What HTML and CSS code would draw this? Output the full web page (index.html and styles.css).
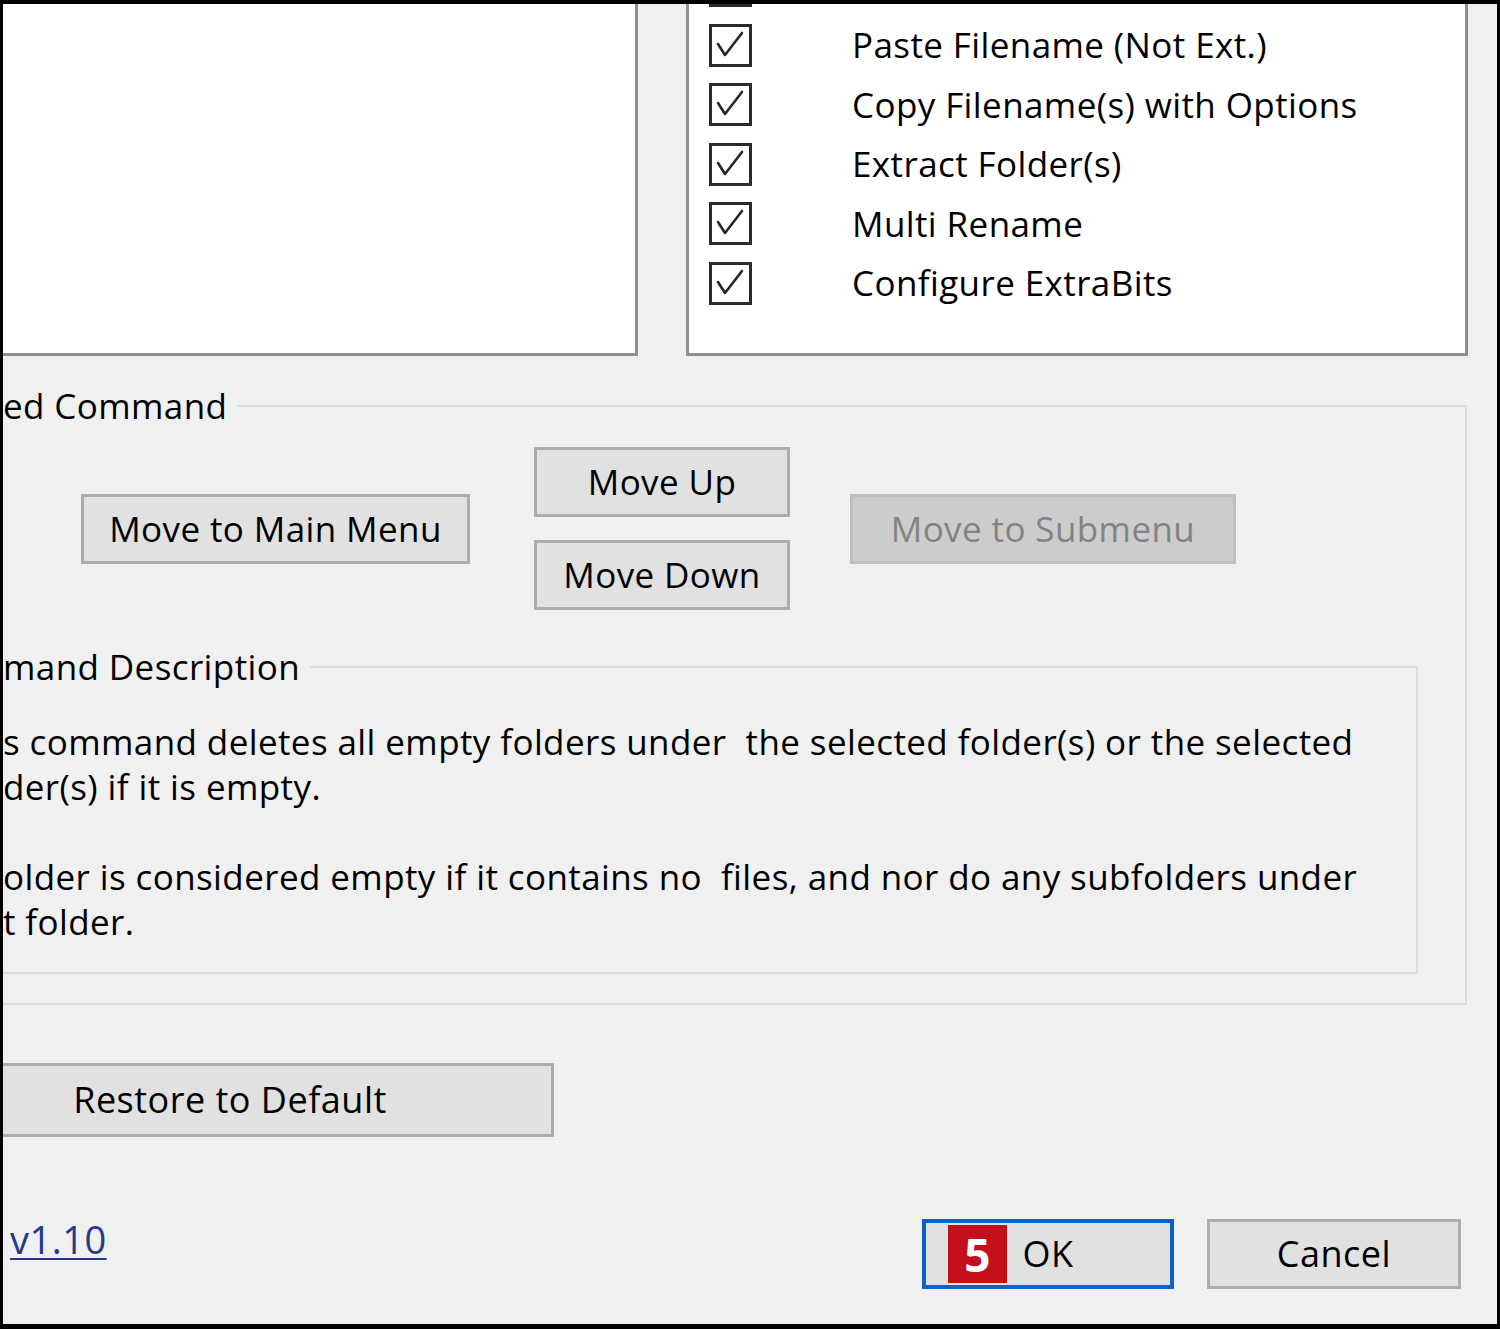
FILE: index.html
```html
<!DOCTYPE html>
<html lang="en">
<head>
<meta charset="utf-8">
<title>Configure ExtraBits</title>
<link rel="stylesheet" href="styles.css">
</head>
<body>
<div class="frame">
  <div class="lists">
    <div class="list list-left"></div>
    <div class="list list-right">
      <div class="rows">
        <div class="row row-partial"><span class="check"></span></div>
        <div class="row">
          <span class="check"><svg viewBox="0 0 37 37" class="tick"><polyline points="6,17 13,28 30,6"/></svg></span>
          <span class="row-label">Paste Filename (Not Ext.)</span>
        </div>
        <div class="row">
          <span class="check"><svg viewBox="0 0 37 37" class="tick"><polyline points="6,17 13,28 30,6"/></svg></span>
          <span class="row-label">Copy Filename(s) with Options</span>
        </div>
        <div class="row">
          <span class="check"><svg viewBox="0 0 37 37" class="tick"><polyline points="6,17 13,28 30,6"/></svg></span>
          <span class="row-label">Extract Folder(s)</span>
        </div>
        <div class="row">
          <span class="check"><svg viewBox="0 0 37 37" class="tick"><polyline points="6,17 13,28 30,6"/></svg></span>
          <span class="row-label">Multi Rename</span>
        </div>
        <div class="row">
          <span class="check"><svg viewBox="0 0 37 37" class="tick"><polyline points="6,17 13,28 30,6"/></svg></span>
          <span class="row-label">Configure ExtraBits</span>
        </div>
      </div>
    </div>
  </div>

  <fieldset class="group group-cmd">
    <legend class="group-title">ed Command</legend>
    <div class="cmd-row">
      <button class="btn btn-main" type="button">Move to Main Menu</button>
      <div class="updown">
        <button class="btn btn-move" type="button">Move Up</button>
        <button class="btn btn-move" type="button">Move Down</button>
      </div>
      <button class="btn btn-sub" type="button" disabled>Move to Submenu</button>
    </div>
    <fieldset class="group group-desc">
      <legend class="group-title">mand Description</legend>
      <p class="desc">s command deletes all empty folders under&nbsp; the selected folder(s) or the selected<br>der(s) if it is empty.<br><br>older is considered empty if it contains no&nbsp; files, and nor do any subfolders under<br>t folder.</p>
    </fieldset>
  </fieldset>

  <div class="restore-row">
    <button class="btn btn-restore" type="button">Restore to Default</button>
  </div>

  <div class="footer">
    <a class="version" href="#">v1.10</a>
    <div class="actions">
      <button class="btn btn-ok" type="button"><span class="badge">5</span>OK</button>
      <button class="btn btn-cancel" type="button">Cancel</button>
    </div>
  </div>
</div>
</body>
</html>
```

FILE: styles.css
```css
html, body {
  margin: 0;
  padding: 0;
  background: #f0f0f0;
}

body {
  font-family: "Open Sans", "Noto Sans", sans-serif;
  font-size: 35px;
  letter-spacing: 0.4px;
  color: #000;
}

.frame {
  width: 1500px;
  height: 1329px;
  box-sizing: border-box;
  border-style: solid;
  border-color: #000;
  border-width: 4px 3px 5px 3px;
  background: #f0f0f0;
  overflow: hidden;
}

/* ---------- list boxes ---------- */
.lists {
  display: flex;
  height: 352px;
}

.list {
  background: #fff;
  box-sizing: border-box;
  border: 0 solid #8a9096;
  overflow: hidden;
}

.list-left {
  width: 635px;
  border-right-width: 3px;
  border-bottom-width: 3px;
  margin-right: 48px;
}

.list-right {
  width: 782px;
  border-left-width: 3px;
  border-right-width: 3px;
  border-bottom-width: 3px;
}

.rows {
  padding-left: 20px;
  margin-top: -48px;
}

.row {
  height: 59.5px;
  display: flex;
  align-items: center;
}

.check {
  width: 43px;
  height: 43px;
  box-sizing: border-box;
  border: 3px solid #2a2a2a;
  background: #fff;
  flex: none;
  display: flex;
}

.tick {
  width: 37px;
  height: 37px;
  fill: none;
  stroke: #262626;
  stroke-width: 2.6;
  stroke-linejoin: round;
  stroke-linecap: round;
}

.row-label {
  margin-left: 100px;
  white-space: nowrap;
  line-height: 40px;
}

/* ---------- group boxes ---------- */
.group {
  margin: 0;
  padding: 0;
  min-inline-size: 0;
  border: 2px solid #dcdcdc;
  border-left: none;
}

.group-title {
  padding: 0 10px 0 0;
  margin: 0;
  line-height: 40px;
  white-space: nowrap;
}

.group-cmd {
  margin: 30px 30px 0 0;
  padding-bottom: 29px;
}

.cmd-row {
  display: flex;
  align-items: center;
  margin-top: 21px;
  padding-left: 78px;
}

.updown {
  display: flex;
  flex-direction: column;
  gap: 23px;
  margin: 0 60px 0 64px;
}

.group-desc {
  margin: 37px 47px 0 0;
  padding-bottom: 28px;
}

.desc {
  margin: 32px 0 0 0;
  line-height: 45px;
  white-space: nowrap;
}

/* ---------- buttons ---------- */
.btn {
  font: inherit;
  letter-spacing: inherit;
  color: #000;
  background: #e1e1e1;
  border: 3px solid #adadad;
  box-sizing: border-box;
  height: 70px;
  padding: 0;
  margin: 0;
  white-space: nowrap;
  line-height: 40px;
}

.btn-main { width: 389px; }
.btn-move { width: 256px; }

.btn-sub {
  width: 386px;
  background: #cccccc;
  border-color: #bfbfbf;
  color: #838383;
}

.restore-row {
  margin-top: 58px;
}

.btn-restore {
  width: 648px;
  height: 74px;
  margin-left: -97px;
  font-size: 36px;
  letter-spacing: 0.5px;
}

/* ---------- footer ---------- */
.footer {
  margin-top: 82px;
  display: flex;
  justify-content: space-between;
  align-items: flex-start;
  padding: 0 36px 0 7px;
}

.version {
  color: #1f3a8c;
  font-size: 38px;
  letter-spacing: 0.5px;
  line-height: 40px;
  text-decoration: underline;
  text-decoration-thickness: 2px;
  text-underline-offset: 4px;
}

.actions {
  display: flex;
  gap: 33px;
}

.btn-ok,
.btn-cancel {
  font-size: 36px;
  letter-spacing: 0.5px;
}

.btn-ok {
  width: 252px;
  border: 4px solid #0a64c8;
  position: relative;
}

.btn-cancel {
  width: 254px;
}

.badge {
  position: absolute;
  left: 22px;
  top: 2px;
  width: 59px;
  height: 58px;
  background: #c4101c;
  color: #fff;
  font-weight: 700;
  font-size: 46px;
  letter-spacing: 0;
  line-height: 58px;
  text-align: center;
}
```
